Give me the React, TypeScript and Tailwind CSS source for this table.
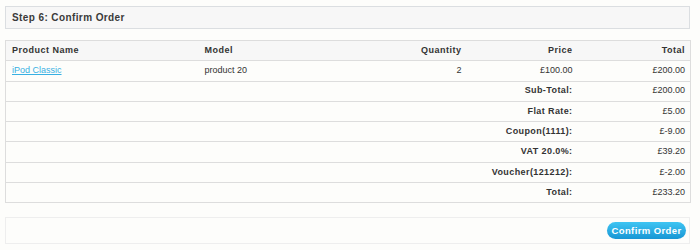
import React from 'react';

const products = [
  { name: 'iPod Classic', model: 'product 20', quantity: 2, price: '£100.00', total: '£200.00' },
];

const totals = [
  { title: 'Sub-Total:', text: '£200.00' },
  { title: 'Flat Rate:', text: '£5.00' },
  { title: 'Coupon(1111):', text: '£-9.00' },
  { title: 'VAT 20.0%:', text: '£39.20' },
  { title: 'Voucher(121212):', text: '£-2.00' },
  { title: 'Total:', text: '£233.20' },
];

export default function App() {
  return (
    <div
      className="min-h-[250px] w-[700px] bg-[#fdfdfb] pl-[5px] pt-[6px] text-[#333]"
      style={{ fontFamily: '"Liberation Sans", Arial, sans-serif' }}
    >
      <div className="w-[685px]">
        {/* Step heading */}
        <div className="flex h-[23px] items-center border border-[#dbdee1] bg-[#f7f7f7] px-[6px] text-[10px] font-bold tracking-[0.4px] text-[#3a3a3a]">
          Step 6: Confirm Order
        </div>

        {/* Order summary */}
        <table className="mt-[11px] w-full table-fixed border-collapse border border-[#dddddd] text-[9px]">
          <colgroup>
            <col className="w-[193px]" />
            <col className="w-[135px]" />
            <col className="w-[134px]" />
            <col className="w-[111px]" />
            <col className="w-[112px]" />
          </colgroup>
          <thead>
            <tr className="h-[20.3px] border-b border-[#dddddd] bg-[#f7f7f7] font-bold tracking-[0.5px] text-[#333]">
              <td className="px-[6px] text-left">Product Name</td>
              <td className="px-[6px] text-left">Model</td>
              <td className="px-[6px] text-right">Quantity</td>
              <td className="px-[6px] text-right">Price</td>
              <td className="px-[5px] text-right">Total</td>
            </tr>
          </thead>
          <tbody>
            {products.map((p) => (
              <tr key={p.name} className="h-[20.3px] border-b border-[#dddddd]">
                <td className="px-[6px]">
                  <a href="#" className="text-[#38b0e3] underline">
                    {p.name}
                  </a>
                </td>
                <td className="px-[6px]">{p.model}</td>
                <td className="px-[6px] text-right">{p.quantity}</td>
                <td className="px-[6px] text-right">{p.price}</td>
                <td className="px-[5px] text-right">{p.total}</td>
              </tr>
            ))}
            {totals.map((t) => (
              <tr key={t.title} className="h-[20.3px] border-b border-[#dddddd]">
                <td colSpan={4} className="px-[6px] text-right font-bold tracking-[0.4px]">
                  {t.title}
                </td>
                <td className="px-[5px] text-right">{t.text}</td>
              </tr>
            ))}
          </tbody>
        </table>

        {/* Confirm button bar */}
        <div className="mt-[14px] flex h-[27px] items-center justify-end border border-[#eeeeee] bg-[#fdfdfb] pr-[3px]">
          <button className="flex h-[17px] w-[79px] items-center justify-center rounded-full bg-gradient-to-b from-[#3ec5f3] to-[#1796d4] text-[9.5px] font-bold tracking-[0.4px] text-white">
            Confirm Order
          </button>
        </div>
      </div>
    </div>
  );
}
